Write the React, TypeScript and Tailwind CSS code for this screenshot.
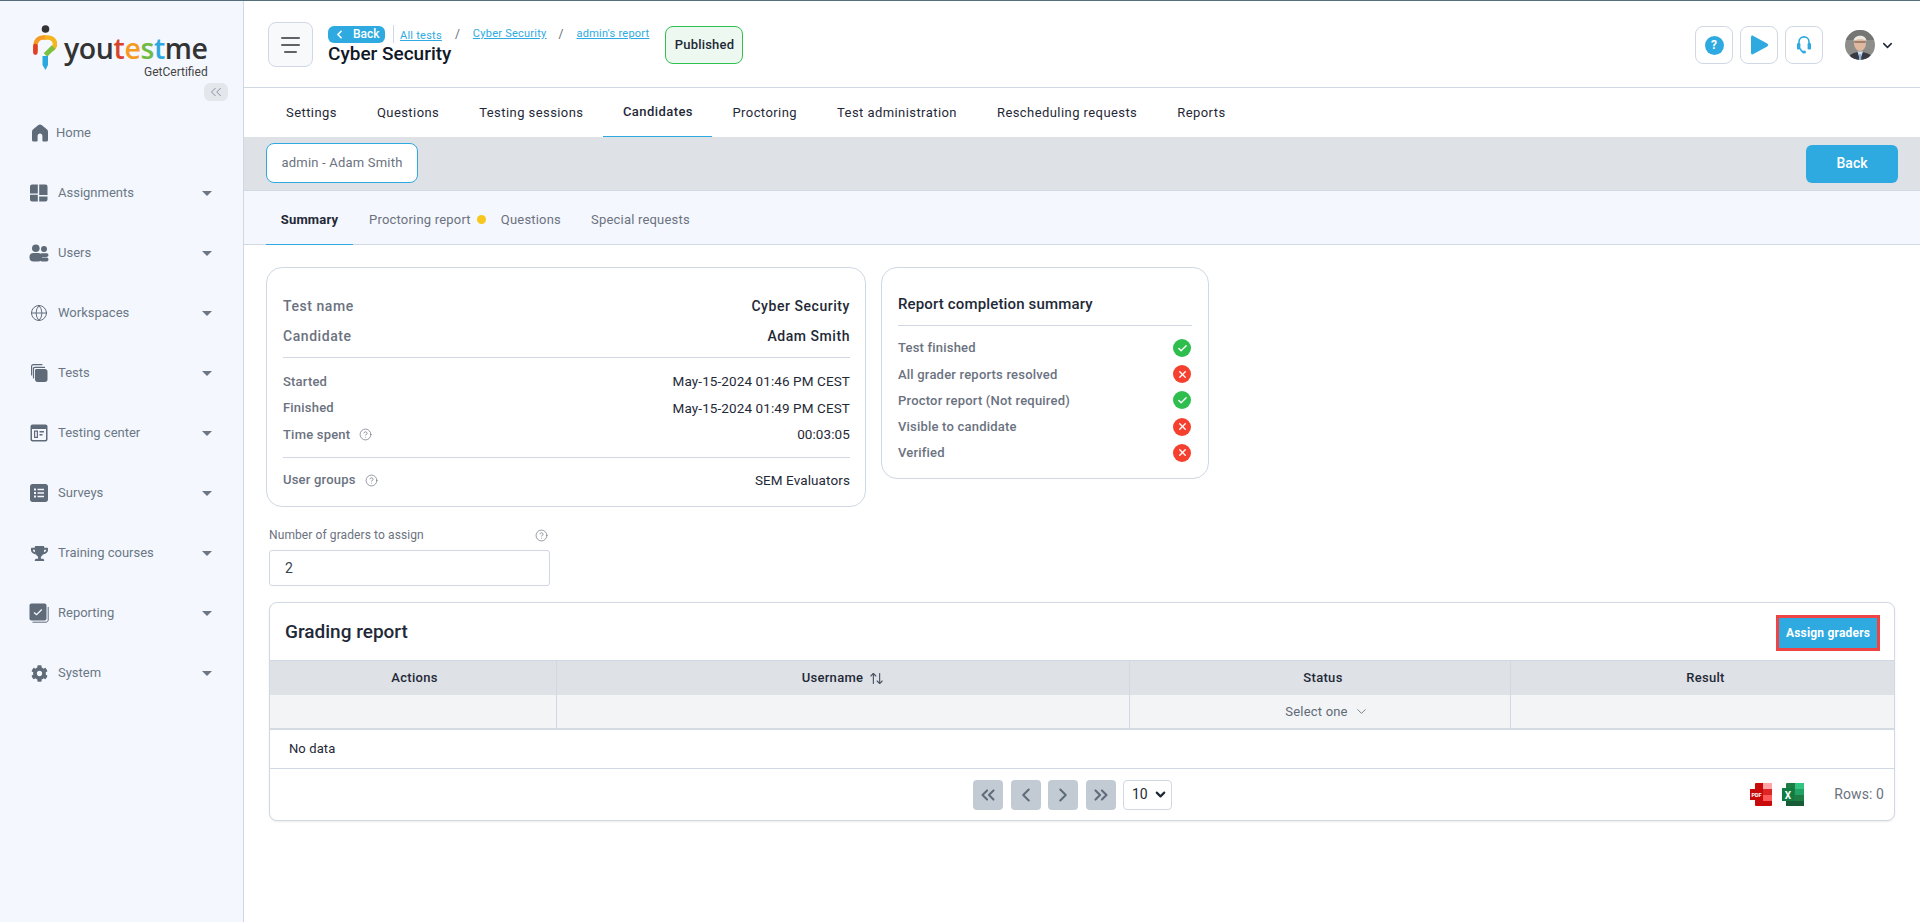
import React from 'react';
import { ChevronLeft, ChevronRight, ChevronDown, ChevronsLeft, ChevronsRight, Globe, CircleHelp, Check, X, ArrowUpDown } from 'lucide-react';
import { FaTrophy, FaCog } from 'react-icons/fa';

const ICON = 'w-[20px] h-[20px] text-[#5f6b78] fill-current';

const HomeIcon = () => (
  <svg viewBox="0 0 20 20" className={ICON}>
    <path d="M10 1.5 C9.4 1.5 8.9 1.7 8.4 2.1 L3.2 6.3 C2.4 6.9 2 7.7 2 8.7 V17 C2 17.9 2.6 18.5 3.5 18.5 H6.6 C7.2 18.5 7.6 18.1 7.6 17.5 V13 C7.6 11.7 8.7 10.6 10 10.6 S12.4 11.7 12.4 13 V17.5 C12.4 18.1 12.8 18.5 13.4 18.5 H16.5 C17.4 18.5 18 17.9 18 17 V8.7 C18 7.7 17.6 6.9 16.8 6.3 L11.6 2.1 C11.1 1.7 10.6 1.5 10 1.5 Z" />
  </svg>
);
const TilesIcon = () => (
  <svg viewBox="0 0 20 20" className={ICON}>
    <path d="M3 1.5 H8.8 V10.5 H1 V3.5 C1 2.4 1.9 1.5 3 1.5 Z M1 11.8 H8.8 V18.5 H3 C1.9 18.5 1 17.6 1 16.5 Z M10.2 1.5 H16.5 C17.6 1.5 18.5 2.4 18.5 3.5 V12 H10.2 Z M10.2 13.4 H18.5 V16.5 C18.5 17.6 17.6 18.5 16.5 18.5 H10.2 Z" />
  </svg>
);
const UsersIcon = () => (
  <svg viewBox="0 0 20 20" className={ICON}>
    <circle cx="6.8" cy="5.2" r="3.8" />
    <circle cx="15" cy="6" r="3" />
    <rect x="0.5" y="10" width="12.5" height="8.5" rx="4" />
    <rect x="11" y="10.3" width="8.5" height="3.6" rx="1.8" />
    <rect x="11" y="14.6" width="8.5" height="3.8" rx="1.9" />
  </svg>
);
const StackIcon = () => (
  <svg viewBox="0 0 20 20" className={ICON}>
    <path d="M7.5 6 H16 C17.4 6 18.5 7.1 18.5 8.5 V16.5 C18.5 17.9 17.4 19 16 19 H8.5 C7.1 19 6 17.9 6 16.5 V7.5 C6 6.7 6.7 6 7.5 6 Z" />
    <path d="M4.5 15 V5.5 C4.5 4.9 5 4.4 5.6 4.4 H15.5 M2.6 12 V3.5 C2.6 2.4 3.4 1.6 4.5 1.6 H13" fill="none" stroke="currentColor" strokeWidth="1.2" strokeLinecap="round" />
  </svg>
);
const CenterIcon = () => (
  <svg viewBox="0 0 20 20" className={ICON}>
    <path fillRule="evenodd" d="M3.5 1.5 H16.5 C17.6 1.5 18.5 2.4 18.5 3.5 V16.5 C18.5 17.6 17.6 18.5 16.5 18.5 H3.5 C2.4 18.5 1.5 17.6 1.5 16.5 V3.5 C1.5 2.4 2.4 1.5 3.5 1.5 Z M3 6 V16 C3 16.6 3.4 17 4 17 H16 C16.6 17 17 16.6 17 16 V6 Z M5 7.5 H9 V15 H5 Z M6.2 8.7 V13.8 H7.8 V8.7 Z M10.5 8 H15 V9.4 H10.5 Z M10.5 11 H13.5 V12.4 H10.5 Z" />
  </svg>
);
const ListIcon = () => (
  <svg viewBox="0 0 20 20" className={ICON}>
    <path fillRule="evenodd" d="M3.5 1 H16.5 C17.8 1 19 2.2 19 3.5 V16.5 C19 17.8 17.8 19 16.5 19 H3.5 C2.2 19 1 17.8 1 16.5 V3.5 C1 2.2 2.2 1 3.5 1 Z M5 5.5 V7.5 H7 V5.5 Z M8.5 5.8 V7.2 H15 V5.8 Z M5 9 V11 H7 V9 Z M8.5 9.3 V10.7 H15 V9.3 Z M5 12.5 V14.5 H7 V12.5 Z M8.5 12.8 V14.2 H15 V12.8 Z" />
  </svg>
);
const ReportIcon = () => (
  <svg viewBox="0 0 20 20" className={ICON}>
    <path fillRule="evenodd" d="M2.5 0.5 H15.5 C16.6 0.5 17.5 1.4 17.5 2.5 V15.5 C17.5 16.6 16.6 17.5 15.5 17.5 H2.5 C1.4 17.5 0.5 16.6 0.5 15.5 V2.5 C0.5 1.4 1.4 0.5 2.5 0.5 Z M5.5 9 L4.6 9.9 L7.6 12.6 L13.2 7 L12.3 6.1 L7.6 10.8 Z" />
    <path d="M19.2 4 V17 C19.2 18.2 18.2 19.2 17 19.2 H3.5" fill="none" stroke="currentColor" strokeWidth="1" />
  </svg>
);

const menu = [
  { label: 'Assignments', icon: <TilesIcon /> },
  { label: 'Users', icon: <UsersIcon /> },
  { label: 'Workspaces', icon: <Globe className="w-[18px] h-[18px] text-[#5f6b78]" strokeWidth={1.3} /> },
  { label: 'Tests', icon: <StackIcon /> },
  { label: 'Testing center', icon: <CenterIcon /> },
  { label: 'Surveys', icon: <ListIcon /> },
  { label: 'Training courses', icon: <FaTrophy className="w-[17px] h-[17px] text-[#5f6b78]" /> },
  { label: 'Reporting', icon: <ReportIcon /> },
  { label: 'System', icon: <FaCog className="w-[17px] h-[17px] text-[#5f6b78]" /> },
];

const Logo = () => (
  <div className="flex items-start pl-[33px] pt-[24px] h-[82px]">
    <svg viewBox="0 0 24 46" className="w-[24px] h-[46px] shrink-0">
      <circle cx="12.5" cy="4" r="3.8" fill="#333" />
      <path d="M2.5 26 V20 C2.5 15.5 6 12.5 10 12.5 H13" fill="none" stroke="#f59a23" strokeWidth="4.6" />
      <path d="M2.4 21 V27.6" fill="none" stroke="#e0402a" strokeWidth="4.6" strokeLinecap="round" />
      <path d="M12 12.5 H15 C19 12.5 22 15.5 22 19 C22 21 21 23 19 24.5" fill="none" stroke="#f5b51e" strokeWidth="4.6" />
      <path d="M20.5 22 L12.5 30" fill="none" stroke="#7ac143" strokeWidth="5" />
      <path d="M9.5 31 H15 V40 L12.5 45 L9.5 40 Z" fill="#2ba8e0" />
    </svg>
    <div className="ml-[7px] flex flex-col items-end">
      <div className="font-['Open_Sans',sans-serif] font-semibold text-[28.5px] leading-[32px] tracking-[-0.4px] text-[#333] pt-[7px]">
        you<span className="text-[#d8432a]">t</span><span className="text-[#f59a23]">e</span><span className="text-[#6fbb44]">s</span><span className="text-[#2ba8e0]">t</span>me
      </div>
      <div className="text-[12px] leading-[14px] text-[#444] mt-[1px]">GetCertified</div>
    </div>
  </div>
);

const Sidebar = () => (
  <aside className="w-[244px] shrink-0 bg-[#f4f7fe] border-r border-[#cfd8e3] flex flex-col">
    <Logo />
    <div className="flex justify-end pr-[15px]">
      <div className="w-[24px] h-[18px] rounded-[6px] bg-[#e3e6ea] flex items-center justify-center">
        <ChevronsLeft className="w-[18px] h-[18px] text-[#6b7785]" strokeWidth={1} />
      </div>
    </div>
    <nav className="flex flex-col mt-[2px]">
      <div className="h-[60px] flex items-center pl-[30px] text-[13px] text-[#6b7785]">
        <span className="w-[20px] flex justify-center mr-[6px]"><HomeIcon /></span>
        {'Home'}
      </div>
      {menu.map((m) => (
        <div key={m.label} className="h-[60px] flex items-center pl-[28px] pr-[31px] text-[13px] text-[#6b7785]">
          <span className="w-[22px] flex justify-center mr-[8px]">{m.icon}</span>
          <span className="flex-1">{m.label}</span>
          <span className="w-0 h-0 border-l-[5px] border-r-[5px] border-t-[5px] border-l-transparent border-r-transparent border-t-[#6b7785]" />
        </div>
      ))}
    </nav>
  </aside>
);

const Crumb = ({ children }: { children: React.ReactNode }) => (
  <a className="text-[11px] leading-[14px] text-[#2eaae1] underline tracking-[0.25px]">{children}</a>
);

const IconBtn = ({ children }: { children: React.ReactNode }) => (
  <div className="w-[38px] h-[38px] rounded-[8px] border border-[#cfd8e3] flex items-center justify-center bg-white">{children}</div>
);

const HeadsetIcon = () => (
  <svg viewBox="0 0 14 18" className="w-[14px] h-[18px]" fill="none" stroke="#2eaae1">
    <path d="M2 8 V5.8 C2 3 4.2 0.9 7 0.9 S12 3 12 5.8 V8" strokeWidth="1.6" />
    <rect x="0" y="7" width="3.4" height="6.4" rx="1.2" fill="#2eaae1" strokeWidth="0" />
    <rect x="10.6" y="7" width="3.4" height="6.4" rx="1.2" fill="#2eaae1" strokeWidth="0" />
    <path d="M3.4 12.5 C3.8 14.6 5 15.6 6.4 15.9" strokeWidth="1.4" />
    <ellipse cx="7" cy="16" rx="2" ry="1.6" fill="#2eaae1" strokeWidth="0" />
  </svg>
);

const Avatar = () => (
  <svg viewBox="0 0 30 30" className="w-[30px] h-[30px] rounded-full">
    <rect width="30" height="30" fill="#8d8d8a" />
    <rect width="30" height="10" fill="#757573" />
    <path d="M3 30 C4 24 9 22 15 22 C21 22 27 24 28 30 Z" fill="#383b43" />
    <path d="M12.5 21.5 L15 30 L18 21.5 Z" fill="#d4e2f0" />
    <path d="M14.2 24 H16 L16.4 30 H13.8 Z" fill="#8fb4d8" />
    <ellipse cx="15" cy="13.5" rx="6" ry="7.5" fill="#e0b8a0" />
    <path d="M8.5 11 C9 4.5 21 3.5 21.5 11 C19 8.5 12 8.5 8.5 11 Z" fill="#ece9e2" />
    <path d="M9.5 12 H20.5" stroke="#4a3c36" strokeWidth="0.9" />
  </svg>
);

const Header = () => (
  <header className="h-[87px] shrink-0 border-b border-[#cfd8e3] flex items-start pl-[24px] pr-[25px] pt-[21px] bg-white">
    <div className="w-[45px] h-[45px] rounded-[8px] border border-[#cfd8e3] bg-[#f8f9fb] flex flex-col items-center justify-center gap-[5px]">
      <span className="block w-[19px] h-[2px] bg-[#5f6368] rounded" />
      <span className="block w-[19px] h-[2px] bg-[#5f6368] rounded" />
      <span className="block w-[13px] h-[2px] bg-[#5f6368] rounded" />
    </div>
    <div className="ml-[15px] pt-[3px] flex flex-col">
      <div className="flex items-center h-[18px]">
        <div className="w-[57px] h-[17px] rounded-[6px] bg-[#2eaae1] text-white text-[12px] font-medium flex items-center pl-[5px] gap-[7px]">
          <ChevronLeft className="w-[13px] h-[13px]" strokeWidth={3} />
          Back
        </div>
        <span className="ml-[8px] w-px h-[18px] bg-[#cfd8e3]" />
        <span className="ml-[6px]"><Crumb>All tests</Crumb></span>
        <span className="ml-[13px] mr-[13px] text-[12px] text-[#5f6b78]">/</span>
        <Crumb>Cyber Security</Crumb>
        <span className="ml-[12px] mr-[13px] text-[12px] text-[#5f6b78]">/</span>
        <Crumb>admin's report</Crumb>
      </div>
      <div className="text-[19px] leading-[22px] font-medium text-[#111827]">Cyber Security</div>
    </div>
    <div className="ml-[16px] mt-[4px] w-[78px] h-[38px] rounded-[8px] border border-[#2fc04f] bg-[#edf8f0] text-[13px] font-medium text-[#1f2937] flex items-center justify-center tracking-[0.2px]">
      Published
    </div>
    <div className="flex-1" />
    <div className="flex items-center gap-[7px] mt-[4px]">
      <IconBtn>
        <span className="w-[19px] h-[19px] rounded-full bg-[#2eaae1] text-white text-[12px] font-bold flex items-center justify-center">?</span>
      </IconBtn>
      <IconBtn>
        <svg viewBox="0 0 20 20" className="w-[20px] h-[20px] fill-[#2eaae1]">
          <path d="M2 2.2 C2 0.8 3.2 0.2 4.4 0.9 L18.2 8.6 C19.4 9.3 19.4 10.7 18.2 11.4 L4.4 19.1 C3.2 19.8 2 19.2 2 17.8 Z" />
        </svg>
      </IconBtn>
      <IconBtn>
        <HeadsetIcon />
      </IconBtn>
    </div>
    <div className="ml-[22px] mt-[8px] flex items-center">
      <Avatar />
      <ChevronDown className="ml-[5px] w-[15px] h-[15px] text-[#1f2937]" strokeWidth={2.4} />
    </div>
  </header>
);

const topTabs = ['Settings', 'Questions', 'Testing sessions', 'Candidates', 'Proctoring', 'Test administration', 'Rescheduling requests', 'Reports'];

const TopTabs = () => (
  <div className="h-[49px] shrink-0 bg-white flex pl-[22px]">
    {topTabs.map((t) => (
      <div
        key={t}
        className={
          t === 'Candidates'
            ? 'px-[19.5px] h-[49px] flex items-center text-[13px] tracking-[0.43px] font-medium text-[#1f2937] border-b border-[#2eaae1]'
            : 'px-[20px] h-[49px] flex items-center text-[13px] tracking-[0.43px] text-[#1f2937]'
        }
      >
        {t}
      </div>
    ))}
  </div>
);

const GrayBar = () => (
  <div className="h-[54px] shrink-0 bg-[#dee1e6] border-b border-[#cfd8e3] flex items-center justify-between pl-[22px] pr-[22px]">
    <div className="w-[152px] h-[40px] -mt-[1px] rounded-[8px] border border-[#2eaae1] bg-white text-[13px] text-[#6b7280] tracking-[0.2px] flex items-center justify-center">
      admin - Adam Smith
    </div>
    <div className="w-[92px] h-[38px] rounded-[6px] bg-[#2eaae1] text-white text-[14px] font-medium flex items-center justify-center">
      Back
    </div>
  </div>
);

const SubTabs = () => (
  <div className="h-[54px] shrink-0 bg-[#f4f7fe] border-b border-[#cfd8e3] flex pl-[22px] text-[13px] text-[#6b7280] tracking-[0.2px]">
    <div className="w-[87px] h-[54px] pt-[5px] flex items-center justify-center font-bold text-[#1f2937] border-b border-[#2eaae1]">Summary</div>
    <div className="pl-[16px] pt-[5px] flex items-center">
      Proctoring report
      <span className="ml-[6px] w-[9px] h-[9px] rounded-full bg-[#f8c71e] -mt-[2px]" />
    </div>
    <div className="px-[15px] pt-[5px] flex items-center">Questions</div>
    <div className="px-[15px] pt-[5px] flex items-center">Special requests</div>
  </div>
);

const Help = ({ className }: { className?: string }) => (
  <CircleHelp className={'w-[13px] h-[13px] text-[#6b7280] ' + (className ?? '')} strokeWidth={1.3} />
);

const InfoCard = () => (
  <div className="w-[600px] h-[240px] rounded-[16px] border border-[#cfd8e3] pl-[16px] pr-[15px] pt-[23px] text-[#1f2937]">
    <div className="flex justify-between h-[30px] items-center text-[14px] font-medium tracking-[0.55px]">
      <span className="text-[#6b7280]">Test name</span><span>Cyber Security</span>
    </div>
    <div className="flex justify-between h-[30px] items-center text-[14px] font-medium tracking-[0.55px]">
      <span className="text-[#6b7280]">Candidate</span><span>Adam Smith</span>
    </div>
    <div className="mt-[6px] border-t border-[#cfd8e3]" />
    <div className="mt-[10px] flex justify-between h-[26.5px] items-center text-[13px] font-medium tracking-[0.2px]">
      <span className="text-[#6b7280]">Started</span><span className="font-normal text-[13.5px] tracking-[0.1px]">May-15-2024 01:46 PM CEST</span>
    </div>
    <div className="flex justify-between h-[26.5px] items-center text-[13px] font-medium tracking-[0.2px]">
      <span className="text-[#6b7280]">Finished</span><span className="font-normal text-[13.5px] tracking-[0.1px]">May-15-2024 01:49 PM CEST</span>
    </div>
    <div className="flex justify-between h-[26.5px] items-center text-[13px] font-medium tracking-[0.2px]">
      <span className="text-[#6b7280] flex items-center gap-[9px]">Time spent <Help /></span><span className="font-normal text-[13.5px] tracking-[0.1px]">00:03:05</span>
    </div>
    <div className="mt-[9px] border-t border-[#cfd8e3]" />
    <div className="mt-[9.5px] flex justify-between h-[26px] items-center text-[13px] font-medium tracking-[0.2px]">
      <span className="text-[#6b7280] flex items-center gap-[9px]">User groups <Help /></span><span className="font-normal text-[13.5px] tracking-[0.1px]">SEM Evaluators</span>
    </div>
  </div>
);

const summaryRows = [
  { label: 'Test finished', ok: true },
  { label: 'All grader reports resolved', ok: false },
  { label: 'Proctor report (Not required)', ok: true },
  { label: 'Visible to candidate', ok: false },
  { label: 'Verified', ok: false },
];

const SummaryCard = () => (
  <div className="w-[328px] h-[212px] rounded-[16px] border border-[#cfd8e3] px-[16px] pt-[24px]">
    <div className="text-[15px] leading-[24px] font-medium text-[#1f2937] tracking-[0.15px]">Report completion summary</div>
    <div className="mt-[9px] mb-[9px] border-t border-[#cfd8e3]" />
    {summaryRows.map((r) => (
      <div key={r.label} className="h-[26.2px] flex items-center justify-between text-[13px] font-medium text-[#6b7280] tracking-[0.2px]">
        {r.label}
        {r.ok ? (
          <span className="w-[18px] h-[18px] mr-[1px] rounded-full bg-[#2dbe4e] flex items-center justify-center">
            <Check className="w-[11px] h-[11px] text-white" strokeWidth={3} />
          </span>
        ) : (
          <span className="w-[18px] h-[18px] mr-[1px] rounded-full bg-[#f5402f] flex items-center justify-center">
            <X className="w-[11px] h-[11px] text-white" strokeWidth={3} />
          </span>
        )}
      </div>
    ))}
  </div>
);

const PdfIcon = () => (
  <svg viewBox="0 0 22 23" className="w-[22px] h-[23px]">
    <rect x="5" y="0" width="17" height="23" rx="1" fill="#c80a0a" />
    <rect x="13" y="0" width="9" height="6" fill="#ffa5a5" />
    <rect x="13" y="6" width="9" height="6" fill="#dc2626" />
    <rect x="13" y="12" width="9" height="6" fill="#ff5a5a" />
    <rect x="0" y="6" width="13" height="11" fill="#c80a0a" />
    <text x="6.5" y="14" textAnchor="middle" fontSize="5.5" fontWeight="700" fill="#fff" fontFamily="Roboto, sans-serif">PDF</text>
  </svg>
);
const XlsIcon = () => (
  <svg viewBox="0 0 22 23" className="w-[22px] h-[23px]">
    <rect x="4" y="0" width="18" height="23" rx="1" fill="#1e7d45" />
    <rect x="13" y="0" width="9" height="6" fill="#33c481" />
    <rect x="13" y="6" width="9" height="6" fill="#21a366" />
    <rect x="13" y="18" width="9" height="5" fill="#185c37" />
    <rect x="4" y="18" width="9" height="5" fill="#185c37" />
    <rect x="0" y="5" width="12" height="13" fill="#107c41" />
    <text x="6" y="15.5" textAnchor="middle" fontSize="10" fontWeight="700" fill="#fff" fontFamily="Roboto, sans-serif">X</text>
  </svg>
);

const PageBtn = ({ children, className }: { children: React.ReactNode; className?: string }) => (
  <div className={'w-[30px] h-[30px] rounded-[4px] bg-[#c2cbd4] flex items-center justify-center text-[#5f6b78] ' + (className ?? '')}>{children}</div>
);

const COLS = 'grid grid-cols-[286px_573px_381px_1fr]';

const GradingCard = () => (
  <div className="w-[1626px] h-[219px] rounded-[8px] border border-[#cfd8e3] bg-white shadow-[0_1px_2px_rgba(0,0,0,0.08)]">
    <div className="h-[57px] pt-[2px] flex items-center justify-between pl-[15px] pr-[14px]">
      <span className="text-[19px] font-medium text-[#1f2937]">Grading report</span>
      <div className="w-[104px] h-[36px] border-[3px] border-[#ef4444] bg-[#2eaae1] text-white text-[12px] font-bold flex items-center justify-center tracking-[0.2px]">
        Assign graders
      </div>
    </div>
    <div className={COLS + ' h-[35px] bg-[#dee1e6] border-t border-[#cfd8e3] text-[13px] font-medium text-[#1f2937] tracking-[0.3px]'}>
      <div className="flex items-center justify-center pl-[3px]">Actions</div>
      <div className="flex items-center justify-center border-l border-[#cfd8e3] gap-[6px]">
        Username <ArrowUpDown className="w-[15px] h-[15px] text-[#4b5563]" strokeWidth={1.8} />
      </div>
      <div className="flex items-center justify-center border-l border-[#cfd8e3] pl-[6px]">Status</div>
      <div className="flex items-center justify-center border-l border-[#cfd8e3] pl-[6px]">Result</div>
    </div>
    <div className={COLS + ' h-[35px] bg-[#f3f4f6] border-b-2 border-[#d5dbe3]'}>
      <div />
      <div className="border-l border-[#cfd8e3]" />
      <div className="border-l border-[#cfd8e3] flex items-center justify-center pl-[14px] text-[13px] text-[#5f6b78] gap-[6px] tracking-[0.2px]">
        Select one <ChevronDown className="w-[15px] h-[15px]" strokeWidth={1.3} />
      </div>
      <div className="border-l border-[#cfd8e3]" />
    </div>
    <div className="h-[39px] flex items-center pl-[19px] text-[13px] text-[#1f2937] border-b border-[#cfd8e3] tracking-[0.1px]">No data</div>
    <div className="h-[50px] pt-[1px] flex items-center pl-[703px]">
      <PageBtn><ChevronsLeft className="w-[22px] h-[22px]" strokeWidth={2.2} /></PageBtn>
      <PageBtn className="ml-[8px]"><ChevronLeft className="w-[22px] h-[22px]" strokeWidth={2.2} /></PageBtn>
      <PageBtn className="ml-[7px]"><ChevronRight className="w-[22px] h-[22px]" strokeWidth={2.2} /></PageBtn>
      <PageBtn className="ml-[8px]"><ChevronsRight className="w-[22px] h-[22px]" strokeWidth={2.2} /></PageBtn>
      <div className="ml-[7px] w-[49px] h-[30px] rounded-[4px] border border-[#cfd8e3] flex items-center pl-[8px] gap-[5px] text-[14px] text-[#1f2937]">
        10 <ChevronDown className="w-[15px] h-[15px]" strokeWidth={3.4} />
      </div>
      <div className="flex-1" />
      <PdfIcon />
      <span className="ml-[10px]"><XlsIcon /></span>
      <span className="ml-[30px] mr-[10px] text-[14px] text-[#6b7280] tracking-[0.1px]">Rows: 0</span>
    </div>
  </div>
);

export default function App() {
  return (
    <div className="h-screen overflow-hidden bg-white font-[Roboto,sans-serif] border-t border-[#546e7a] flex">
      <Sidebar />
      <main className="flex-1 min-w-0 flex flex-col">
        <Header />
        <TopTabs />
        <GrayBar />
        <SubTabs />
        <div className="pl-[22px] pt-[22px]">
          <div className="flex items-start gap-[15px]">
            <InfoCard />
            <SummaryCard />
          </div>
          <div className="ml-[3px] mt-[20px] w-[281px]">
            <div className="flex items-center justify-between h-[16px] pr-[2px] text-[12px] text-[#6b7280] tracking-[0.1px]">
              Number of graders to assign <Help />
            </div>
            <div className="mt-[7px] h-[36px] rounded-[3px] border border-[#cfd8e3] flex items-center pl-[15px] text-[14px] text-[#374151]">2</div>
          </div>
          <div className="ml-[3px] mt-[16px]">
            <GradingCard />
          </div>
        </div>
      </main>
    </div>
  );
}
